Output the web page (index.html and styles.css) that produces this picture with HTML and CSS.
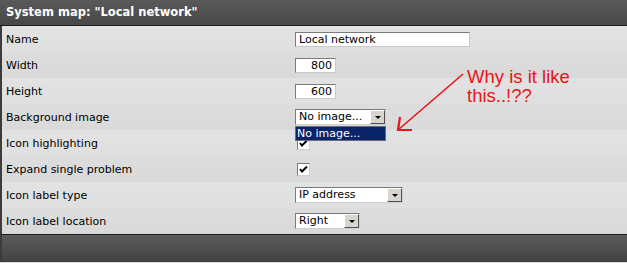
FILE: index.html
```html
<!DOCTYPE html>
<html>
<head>
<meta charset="utf-8">
<link rel="stylesheet" href="styles.css">
</head>
<body>
<div class="panel">
  <div class="header">System map: "Local network"</div>
  <div class="form">
    <div class="row light"><div class="label">Name</div><div class="field"><div class="input w-name">Local network</div></div></div>
    <div class="row dark"><div class="label">Width</div><div class="field"><div class="input w-num num">800</div></div></div>
    <div class="row light"><div class="label">Height</div><div class="field"><div class="input w-num num">600</div></div></div>
    <div class="row dark"><div class="label">Background image</div><div class="field"><div class="select w-bg"><span class="sel-text">No image...</span><span class="btn"><span class="tri"></span></span></div></div></div>
    <div class="row light"><div class="label">Icon highlighting</div><div class="field"><div class="check"><svg width="11" height="11" viewBox="0 0 11 11"><path d="M2 5 L4 7.5 L9 2.5" fill="none" stroke="#000" stroke-width="2"/></svg></div></div></div>
    <div class="row dark"><div class="label">Expand single problem</div><div class="field"><div class="check"><svg width="11" height="11" viewBox="0 0 11 11"><path d="M2 5 L4 7.5 L9 2.5" fill="none" stroke="#000" stroke-width="2"/></svg></div></div></div>
    <div class="row light"><div class="label">Icon label type</div><div class="field"><div class="select w-ip"><span class="sel-text">IP address</span><span class="btn"><span class="tri"></span></span></div></div></div>
    <div class="row dark"><div class="label">Icon label location</div><div class="field"><div class="select w-right"><span class="sel-text">Right</span><span class="btn"><span class="tri"></span></span></div></div></div>
  </div>
  <div class="footer"></div>
  <div class="dropdown">No image...</div>
  <div class="note">Why is it like<br>this..!??</div>
  <svg class="arrow" width="627" height="263" viewBox="0 0 627 263">
    <path d="M463 74 L398 130" stroke="#e8151b" stroke-width="1.6" fill="none"/>
    <path d="M400 117 L398 130 L412 130" stroke="#e8151b" stroke-width="2.2" fill="none"/>
  </svg>
</div>
</body>
</html>
```
FILE: styles.css
```css
html, body {
  margin: 0;
  padding: 0;
  background: #dcdcdc;
}
.panel {
  position: relative;
  width: 627px;
  height: 263px;
  font-family: "DejaVu Sans", Verdana, sans-serif;
  font-size: 11px;
  color: #000;
  overflow: hidden;
}
.header {
  height: 26px;
  box-sizing: border-box;
  padding: 5px 0 0 6px;
  background: linear-gradient(#5a5a5a, #474747);
  border-bottom: 1px solid #1c1c1c;
  color: #fff;
  font-weight: bold;
  font-size: 11.5px;
}
.form {
  border-left: 2px solid #3c3c3c;
}
.row {
  height: 26px;
  display: grid;
  grid-template-columns: 293px 1fr;
  align-items: center;
}
.row.light { background: linear-gradient(#e2e2e2, #dfdfdf); }
.row.dark { background: linear-gradient(#dddddd, #d9d9d9); }
.label {
  padding-left: 4px;
  padding-top: 1px;
}
.field {
  display: flex;
  align-items: center;
}
.input {
  box-sizing: border-box;
  height: 15px;
  background: #fff;
  border: 1px solid #7a7a7a;
  border-right-color: #c8c8c8;
  border-bottom-color: #c8c8c8;
  line-height: 13px;
  padding: 0 3px;
  white-space: nowrap;
}
.input.num { text-align: right; padding-right: 3px; }
.w-name { width: 175px; }
.w-num { width: 41px; }
.select {
  box-sizing: border-box;
  height: 16px;
  display: flex;
  background: #fff;
  border: 1px solid #7a7a7a;
  border-right-color: #d0d0d0;
  border-bottom-color: #d0d0d0;
}
.w-bg { width: 91px; }
.w-ip { width: 108px; }
.w-right { width: 65px; }
.sel-text {
  flex: 1;
  padding-left: 3px;
  line-height: 14px;
  white-space: nowrap;
  overflow: hidden;
}
.btn {
  width: 15px;
  box-sizing: border-box;
  background: #d8d5cf;
  border: 1px solid #fff;
  border-right-color: #505050;
  border-bottom-color: #505050;
  display: flex;
  align-items: center;
  justify-content: center;
}
.tri {
  width: 0;
  height: 0;
  border-left: 3px solid transparent;
  border-right: 3px solid transparent;
  border-top: 3px solid #000;
}
.check {
  box-sizing: border-box;
  width: 13px;
  height: 13px;
  margin-left: 2px;
  background: #fff;
  border: 1px solid #7a7a7a;
  border-right-color: #d0d0d0;
  border-bottom-color: #d0d0d0;
  display: flex;
}
.footer {
  height: 28px;
  box-sizing: border-box;
  border-top: 1px solid #1c1c1c;
  border-left: 2px solid #3c3c3c;
  background: linear-gradient(#5b5b5b, #414141);
}
.dropdown {
  position: absolute;
  left: 295px;
  top: 126px;
  width: 91px;
  height: 15px;
  box-sizing: border-box;
  background: #0a246a;
  color: #fff;
  border: 1px solid #6a6a7a;
  line-height: 13px;
  padding-left: 1px;
}
.note {
  position: absolute;
  left: 467px;
  top: 67px;
  font-family: "Liberation Sans", Arial, sans-serif;
  font-size: 18.5px;
  line-height: 19px;
  color: #e8151b;
}
.arrow {
  position: absolute;
  left: 0;
  top: 0;
  pointer-events: none;
}
```
